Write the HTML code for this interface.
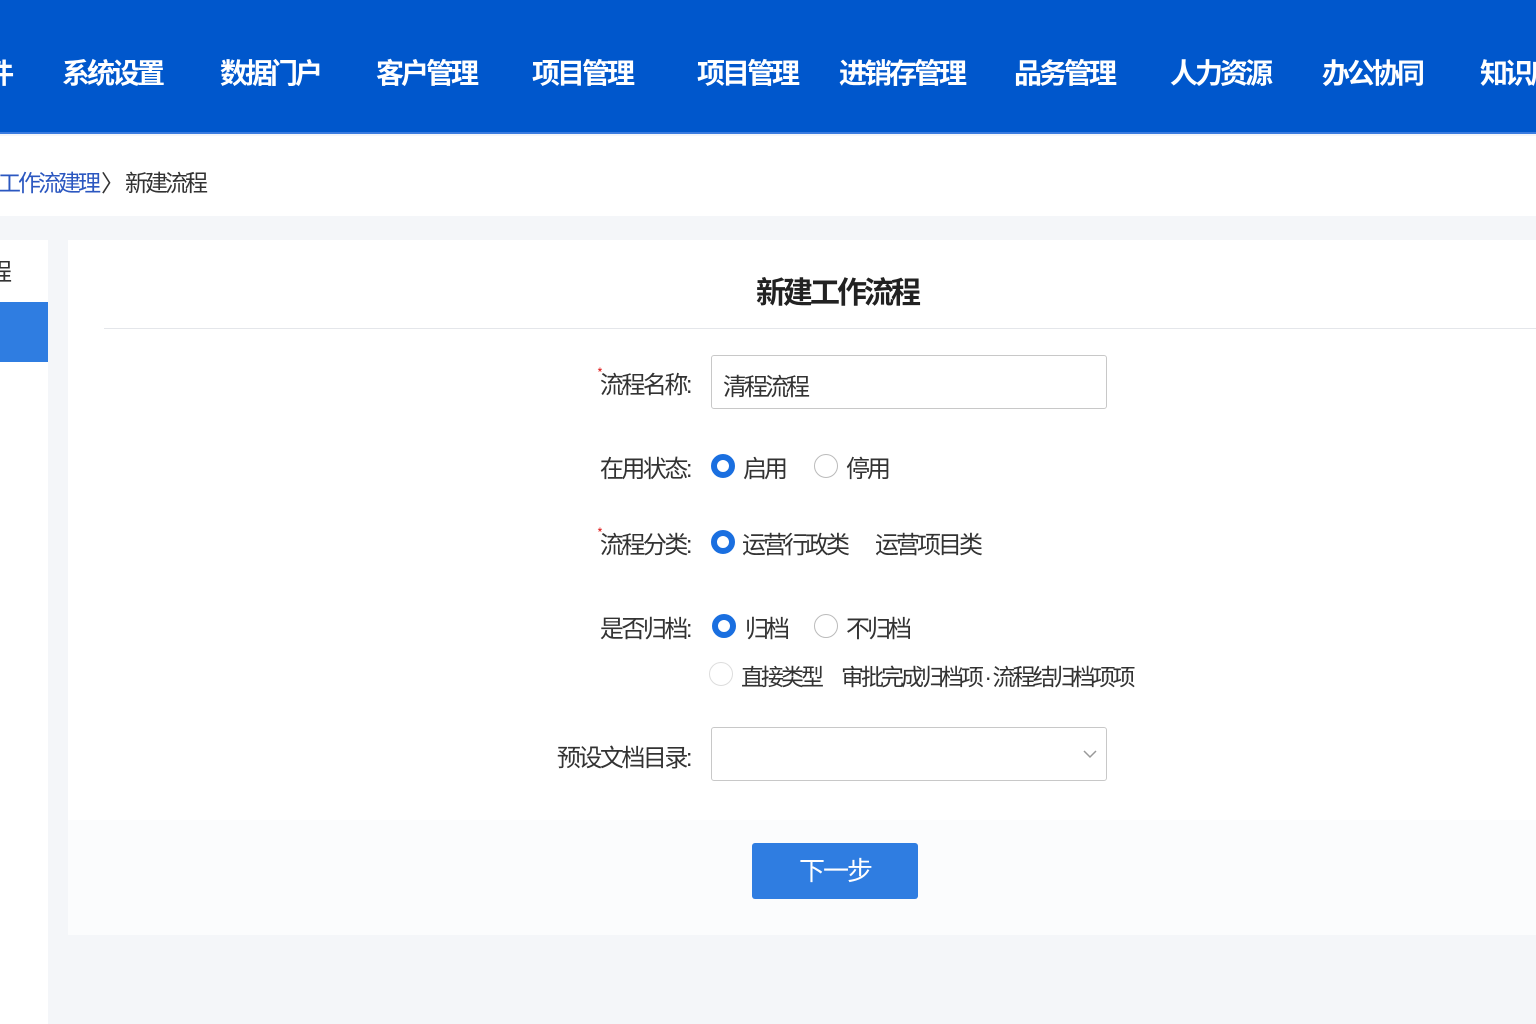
<!DOCTYPE html>
<html><head><meta charset="utf-8"><style>
*{margin:0;padding:0;box-sizing:border-box}
body{width:1536px;height:1024px;overflow:hidden;background:#f4f6f9;font-family:"Liberation Sans","Noto Sans CJK SC",sans-serif;position:relative;color:#333}
.hdr{position:absolute;left:0;top:0;width:1536px;height:134px;background:#0057cc;border-bottom:2px solid #3b7ce0}
.nav{position:absolute;top:52px;color:#fff;font-size:28px;font-weight:bold;white-space:nowrap;letter-spacing:-3px}
.crumb{position:absolute;left:0;top:136px;width:1536px;height:80px;background:#fff}
.crumb span{position:absolute;top:28px;font-size:23px;letter-spacing:-3px}
.side{position:absolute;left:0;top:240px;width:48px;height:784px;background:#fff}
.main{position:absolute;left:68px;top:240px;width:1468px;height:580px;background:#fff}
.low{position:absolute;left:68px;top:820px;width:1468px;height:115px;background:#fbfcfd}
.t{position:absolute;font-size:24px;color:#333;white-space:nowrap;letter-spacing:-3px}
.lab{position:absolute;font-size:24px;color:#333;text-align:right;white-space:nowrap;letter-spacing:-2.5px}
.req{color:#d00;font-size:12px;vertical-align:top}
.r{position:absolute;width:24px;height:24px;border-radius:50%;border:1.5px solid #bbb;background:#fff}
.r.on{border:6px solid #1a6fe0}
.inp{position:absolute;left:711px;width:396px;height:54px;border:1.5px solid #c8c8c8;border-radius:3px;background:#fff}
</style></head><body>
<div class="hdr">
<div class="nav" style="left:-14px">件</div>
<div class="nav" style="left:62px">系统设置</div>
<div class="nav" style="left:220px">数据门户</div>
<div class="nav" style="left:376px">客户管理</div>
<div class="nav" style="left:532px">项目管理</div>
<div class="nav" style="left:697px">项目管理</div>
<div class="nav" style="left:839px">进销存管理</div>
<div class="nav" style="left:1014px">品务管理</div>
<div class="nav" style="left:1170px">人力资源</div>
<div class="nav" style="left:1322px">办公协同</div>
<div class="nav" style="left:1480px">知识库</div>
</div>
<div class="crumb">
<span style="left:-2px;color:#2b57c0">工作流建理</span>
<span style="left:101px;color:#333">〉</span>
<span style="left:125px;color:#333">新建流程</span>
</div>
<div class="side"><div class="t" style="left:-12px;top:12px">程</div><div style="position:absolute;left:0;top:62px;width:48px;height:60px;background:#2f7de1"></div></div>
<div class="main">
<div style="position:absolute;left:0;width:100%;top:28px;text-align:center;font-size:30px;font-weight:bold;color:#222;padding-left:70px;letter-spacing:-3px">新建工作流程</div>
<div style="position:absolute;left:36px;right:0;top:88px;height:1px;background:#e4e6ea"></div>
</div>
<div class="low"></div>
<div class="lab" style="right:846px;top:365px"><span class="req">*</span>流程名称:</div>
<div class="inp" style="top:355px"><span class="t" style="left:11px;top:11px">清程流程</span></div>
<div class="lab" style="right:846px;top:449px">在用状态:</div>
<div class="r on" style="left:711px;top:454px"></div><span class="t" style="left:743px;top:449px">启用</span>
<div class="r" style="left:814px;top:454px"></div><span class="t" style="left:846px;top:449px">停用</span>
<div class="lab" style="right:846px;top:525px"><span class="req">*</span>流程分类:</div>
<div class="r on" style="left:711px;top:530px"></div><span class="t" style="left:742px;top:525px">运营行政类</span>
<span class="t" style="left:875px;top:525px">运营项目类</span>
<div class="lab" style="right:846px;top:609px">是否归档:</div>
<div class="r on" style="left:712px;top:614px"></div><span class="t" style="left:745px;top:609px">归档</span>
<div class="r" style="left:814px;top:614px"></div><span class="t" style="left:846px;top:609px">不归档</span>
<div class="r" style="left:709px;top:662px;border-color:#ddd"></div><span class="t" style="left:741px;top:658px;font-size:23px">直接类型　审批完成归档项 · 流程结归档项项</span>
<div class="lab" style="right:846px;top:738px">预设文档目录:</div>
<div class="inp" style="top:727px"><svg style="position:absolute;right:8px;top:20px" width="16" height="12"><path d="M2 3l6 6 6-6" stroke="#999" stroke-width="1.5" fill="none"/></svg></div>
<div style="position:absolute;left:752px;top:843px;width:166px;height:56px;background:#2f7de1;border-radius:3px;color:#fff;font-size:26px;text-align:center;line-height:56px;letter-spacing:-2px">下一步</div>
</body></html>
